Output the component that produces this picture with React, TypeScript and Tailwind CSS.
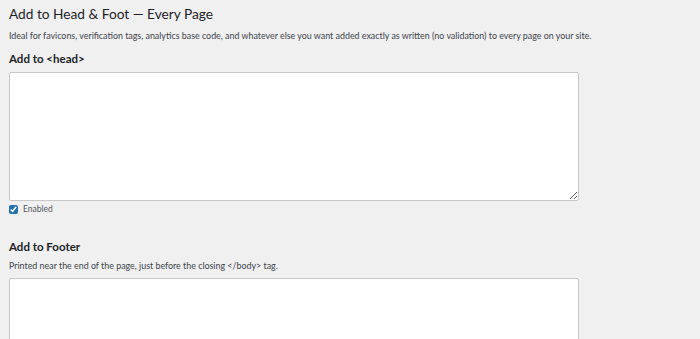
import React, { useState } from "react";

function Section({
  title,
  note,
  children,
}: {
  title: string;
  note?: string;
  children: React.ReactNode;
}) {
  return (
    <div>
      <h2 className="text-[11.5px] font-bold text-[#1d2327] leading-none">{title}</h2>
      {note && <p className="mt-[10px] text-[8.9px] text-[#3c434a] leading-none">{note}</p>}
      {children}
    </div>
  );
}

export default function App() {
  const [headOn, setHeadOn] = useState(true);

  return (
    <div
      className="min-h-screen w-full bg-[#f0f0f1] pl-[9px] pt-[7px] overflow-hidden"
      style={{ fontFamily: 'Lato, "Open Sans", sans-serif' }}
    >
      <h1 className="text-[13.7px] font-normal text-[#1d2327] leading-none">
        Add to Head &amp; Foot — Every Page
      </h1>
      <p className="mt-[11px] text-[8.9px] text-[#3c434a] leading-none">
        Ideal for favicons, verification tags, analytics base code, and whatever else you want added exactly as written (no validation) to every page on your site.
      </p>

      <div className="mt-[12px]">
        <Section title="Add to <head>">
          <textarea className="mt-[8px] block w-[570px] h-[129px] bg-white border border-[#c8c8c8] rounded-[2px] resize-y outline-none" />
          <label className="mt-[2px] flex items-center gap-[5px] text-[8.5px] text-[#50575e]">
            <input
              type="checkbox"
              checked={headOn}
              onChange={(e) => setHeadOn(e.target.checked)}
              className="w-[9px] h-[9px] m-0 accent-[#2271b1]"
            />
            Enabled
          </label>
        </Section>
      </div>

      <div className="mt-[25px]">
        <Section
          title="Add to Footer"
          note="Printed near the end of the page, just before the closing </body> tag."
        >
          <textarea className="mt-[7px] block w-[570px] h-[129px] bg-white border border-[#c8c8c8] rounded-[2px] resize-y outline-none" />
        </Section>
      </div>
    </div>
  );
}
